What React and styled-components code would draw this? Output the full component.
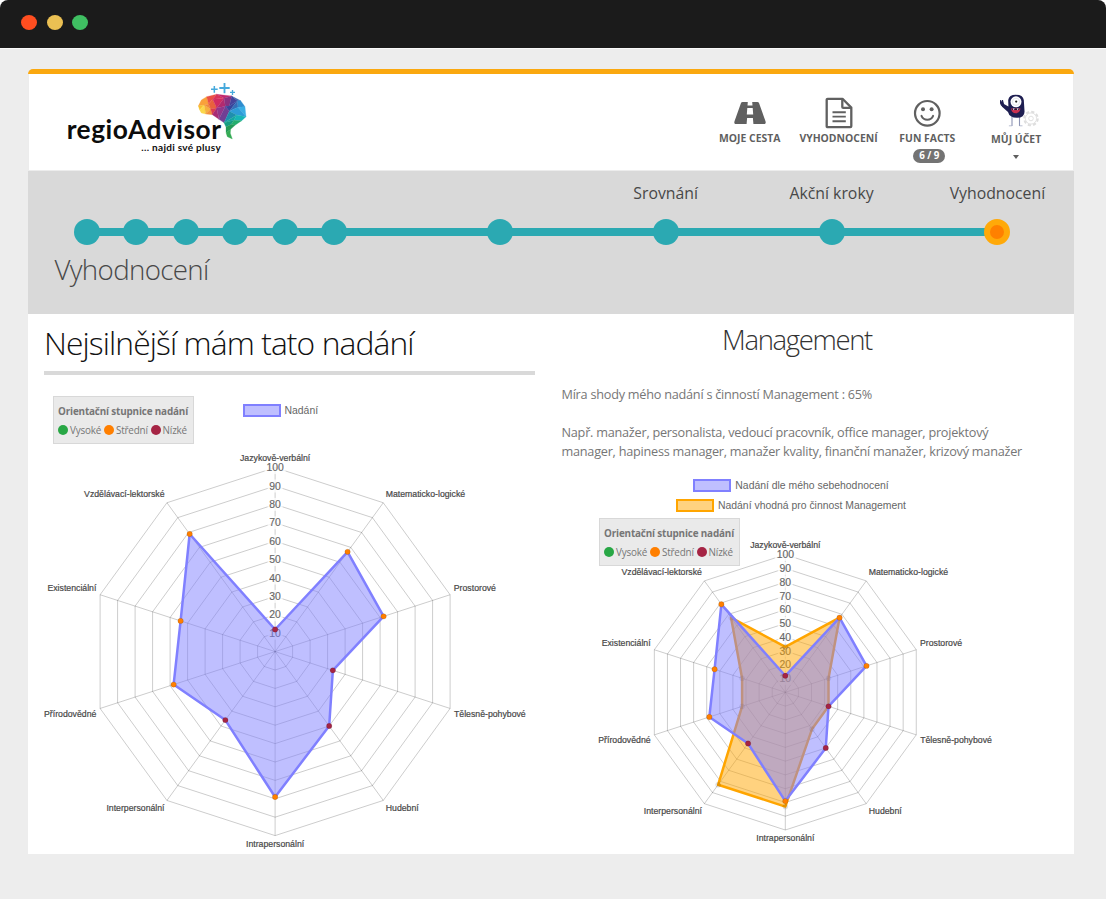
import React from 'react';
import styled, { createGlobalStyle } from 'styled-components';

const GlobalStyle = createGlobalStyle`
  *, *::before, *::after { box-sizing: border-box; }
  body {
    margin: 0;
    background: #fff;
    font-family: "Open Sans", "Noto Sans", sans-serif;
    color: #767676;
  }
`;

const Window = styled.div`
  width: 1106px;
  height: 899px;
  overflow: hidden;
  display: flex;
  flex-direction: column;
`;

const TitleBar = styled.div`
  flex: none;
  height: 48px;
  padding: 0 0 4px 21px;
  display: flex;
  align-items: center;
  gap: 9.6px;
  background: #1b1b1b;
  border-radius: 8px 8px 0 0;
`;

const Light = styled.span`
  width: 16px;
  height: 15px;
  border-radius: 50%;
  background: ${(p) => p.$color};
`;

const Desktop = styled.div`
  flex: 1;
  padding: 21px 32px 45px 28px;
  background: #ededed;
  border-top: 1px solid #fafafa;
`;

const Card = styled.div`
  width: 1046px;
  height: 785px;
  margin-top: -1px;
  display: flex;
  flex-direction: column;
  overflow: hidden;
  background: #fff;
  border-top: 5px solid #faa80f;
  border-radius: 5px 5px 0 0;
`;

const Header = styled.header`
  flex: none;
  height: 97px;
  padding: 4px 12.5px 0 31px;
  display: flex;
  justify-content: space-between;
  border: 1px solid #ececec;
  border-top: 0;
`;

const Nav = styled.nav`
  display: flex;
  align-items: flex-start;
  padding-top: 15px;
`;

const NavItem = styled.a`
  width: 88.8px;
  display: flex;
  flex-direction: column;
  align-items: center;
  font-size: 10.4px;
  line-height: 10px;
  font-weight: 700;
  color: #5f5f5f;
  white-space: nowrap;
`;

const NavIcon = styled.span`
  height: ${(p) => p.$height || 40}px;
  padding-bottom: ${(p) => p.$lift || 0}px;
  display: flex;
  align-items: center;
`;

const Badge = styled.span`
  width: 32px;
  height: 14px;
  margin: 6px 0 0 4px;
  border-radius: 7px;
  background: #737373;
  color: #fff;
  font-size: 9.8px;
  line-height: 14px;
  font-weight: 700;
  text-align: center;
`;

const Caret = styled.span`
  margin-top: 11px;
  border: 3.5px solid transparent;
  border-top: 4px solid #5f5f5f;
  border-bottom: 0;
`;

const Progress = styled.section`
  flex: none;
  height: 143px;
  padding: 10px 0 0 46px;
  background: #d9d9d9;
  color: #484848;
`;

const Steps = styled.div`
  display: flex;
`;

const Step = styled.div`
  width: ${(p) => p.$width}px;
  display: flex;
  align-items: flex-end;
`;

const StepMark = styled.div`
  width: 26px;
  height: 64px;
  display: flex;
  flex-direction: column;
  align-items: center;
  justify-content: space-between;
`;

const StepLabel = styled.span`
  font-size: 15.8px;
  line-height: 24px;
  white-space: nowrap;
`;

const Dot = styled.span`
  width: 26px;
  height: 26px;
  margin-top: auto;
  border-radius: 50%;
  background: ${(p) => (p.$current ? '#ff8000' : '#2ba9b2')};
  border: ${(p) => (p.$current ? '6.5px solid #ffa909' : '0')};
`;

const Connector = styled.span`
  flex: 1;
  height: 8px;
  margin: 0 -1px 9px;
  background: #2ba9b2;
`;

const PageTitle = styled.h1`
  margin: 4px 0 0 -19.5px;
  font-size: 27.7px;
  line-height: 41px;
  font-weight: 300;
  letter-spacing: -0.66px;
`;

const Content = styled.main`
  flex: 1;
  display: grid;
  grid-template-columns: 491px 492px;
  column-gap: 16px;
  padding-left: 16px;
`;

const Panel = styled.section`
  display: flex;
  flex-direction: column;
  min-width: 0;
`;

const PanelTitle = styled.h2`
  margin: 0 0 21px;
  padding-top: 7px;
  height: 61px;
  border-bottom: 4px solid #d9d9d9;
  color: #111;
  font-size: 31.8px;
  line-height: 43px;
  font-weight: 300;
  letter-spacing: -0.91px;
`;

const ActivityTitle = styled.h2`
  margin: 0 0 26px;
  padding-top: 6px;
  height: 45px;
  color: #333;
  font-size: 27.5px;
  line-height: 40px;
  font-weight: 300;
  letter-spacing: -1.35px;
  text-align: center;
`;

const Paragraph = styled.p`
  margin: 0 0 19px 10.5px;
  font-size: 12.7px;
  line-height: 19px;
  letter-spacing: -0.245px;
  color: #767676;
`;

const LegendRow = styled.div`
  display: flex;
  align-items: flex-start;
  padding-left: 9px;
  gap: 49px;
`;

const LegendStack = styled.div`
  height: 39px;
  padding-right: 12px;
  margin-top: -1px;
  display: flex;
  flex-direction: column;
  align-items: center;
  gap: 6.5px;
`;

const LegendItem = styled.span`
  display: flex;
  align-items: center;
  gap: 4px;
  height: 13px;
  margin-top: ${(p) => p.$top || 0}px;
  font: 10.42px/13px "Liberation Sans", Arial, sans-serif;
  color: #666;
  white-space: nowrap;
`;

const Swatch = styled.i`
  width: 38px;
  height: 13px;
  border: 2.4px solid ${(p) => p.$line};
  background: ${(p) => p.$fill};
`;

const ScaleBox = styled.div`
  width: 140.5px;
  height: 48px;
  padding: 6px 0 0 4px;
  border: 1px solid #d8d8d8;
  background: #eaeaea;
  font-size: 9.9px;
  letter-spacing: -0.18px;
  white-space: nowrap;
`;

const ScaleTitle = styled.div`
  font-weight: 700;
  line-height: 16px;
  letter-spacing: -0.16px;
`;

const ScaleLevels = styled.div`
  display: flex;
  gap: 2.8px;
  padding-top: 2px;
`;

const Level = styled.span`
  display: flex;
  align-items: center;
  gap: 2px;
  line-height: 18px;

  &::before {
    content: "";
    width: 10px;
    height: 10px;
    border-radius: 50%;
    background: ${(p) => p.$color};
  }
`;

const ChartArea = styled.div`
  position: relative;
`;

const FloatingScale = styled.div`
  position: absolute;
  left: 48px;
  top: 0;
`;

const ChartSvg = styled.svg`
  display: block;
  font-family: "Liberation Sans", Arial, sans-serif;
`;

const LABELS = [
  'Jazykově-verbální', 'Matematicko-logické', 'Prostorové', 'Tělesně-pohybové', 'Hudební',
  'Intrapersonální', 'Interpersonální', 'Přírodovědné', 'Existenciální', 'Vzdělávací-lektorské',
];
const LABEL_DX = [0, 2.4, 3.7, 3.9, 2.5, 0, -2.4, -3.7, -3.7, -2.4];
const LABEL_DY = [-6.2, -5.6, -3.4, 8.2, 10.6, 11.2, 10.6, 8.2, -3.4, -5.6];
const TALENTS = [12, 67, 62, 33, 50, 79, 46, 58, 54, 79];
const MANAGEMENT = [33, 67, 33, 33, 33, 83, 83, 33, 33, 67];
const LOW = '#a52444';
const MEDIUM = '#ff7f00';
const HIGH = '#28a745';

function Radar({ width, height, cx, cy, radius, series }) {
  const at = (index, value) => {
    const angle = (index * Math.PI) / 5;
    const r = (radius * value) / 100;
    return [cx + r * Math.sin(angle), cy - r * Math.cos(angle)];
  };
  const shape = (values) => values.map((v, i) => at(i, v).join(',')).join(' ');
  const rings = [10, 20, 30, 40, 50, 60, 70, 80, 90, 100];

  return (
    <ChartSvg width={width} height={height} viewBox={`0 0 ${width} ${height}`}>
      <g fill="none" stroke="#000" strokeOpacity="0.2">
        {rings.map((ring) => <polygon key={ring} points={shape(LABELS.map(() => ring))} />)}
        {LABELS.map((label, i) => {
          const [x, y] = at(i, 100);
          return <line key={label} x1={cx} y1={cy} x2={x} y2={y} />;
        })}
      </g>
      <g fontSize="10.4" textAnchor="middle">
        {rings.map((ring) => {
          const y = cy - (radius * ring) / 100;
          const w = ring === 100 ? 21 : 15;
          return (
            <g key={ring}>
              <rect x={cx - w / 2} y={y - 6.5} width={w} height="13" fill="#fff" fillOpacity="0.75" />
              <text x={cx} y={y + 3.6} fill="#666" stroke="#666" strokeWidth="0.15">{ring}</text>
            </g>
          );
        })}
      </g>
      <g fontSize="8.72" fill="#484848" stroke="#484848" strokeWidth="0.2">
        {LABELS.map((label, i) => {
          const [x, y] = at(i, 100);
          const anchor = i % 5 === 0 ? 'middle' : i < 5 ? 'start' : 'end';
          return <text key={label} x={x + LABEL_DX[i]} y={y + LABEL_DY[i]} textAnchor={anchor}>{label}</text>;
        })}
      </g>
      {series.map(({ values, color, fill, graded }) => (
        <g key={color}>
          <polygon points={shape(values)} fill={fill} stroke={color} strokeWidth="2.5" strokeLinejoin="round" />
          {values.map((value, i) => {
            const [x, y] = at(i, value);
            const dot = value > 50 ? MEDIUM : LOW;
            return (
              <circle
                key={LABELS[i]}
                cx={x}
                cy={y}
                r={graded ? 2.7 : 2.6}
                fill={graded ? dot : 'rgba(0,0,0,0.1)'}
                stroke={graded ? 'rgba(0,0,0,0.15)' : 'rgba(0,0,0,0.06)'}
                strokeWidth="0.8"
              />
            );
          })}
        </g>
      ))}
    </ChartSvg>
  );
}

const talentSeries = { values: TALENTS, color: '#8080ff', fill: 'rgba(128,128,255,0.5)', graded: true };
const managementSeries = { values: MANAGEMENT, color: '#ffa500', fill: 'rgba(255,165,0,0.5)' };

function Scale() {
  return (
    <ScaleBox>
      <ScaleTitle>Orientační stupnice nadání</ScaleTitle>
      <ScaleLevels>
        <Level $color={HIGH}>Vysoké</Level>
        <Level $color={MEDIUM}>Střední</Level>
        <Level $color={LOW}>Nízké</Level>
      </ScaleLevels>
    </ScaleBox>
  );
}

function Logo() {
  return (
    <svg width="190" height="80" viewBox="180 234 570 240">
      <g stroke="#45a9dc" strokeWidth="4.5" fill="none">
        <path d="M633 268h20M643 258v20" />
        <path d="M658 264h31M673.500 249v31" strokeWidth="5.500" />
        <path d="M690 277h15M697.500 270v15" strokeWidth="4" />
      </g>
      <g strokeWidth="0.800" strokeLinejoin="round">
        <path d="M595 318l9-18 16-10 6 22-13 3z" fill="#f9a13b" stroke="#f9a13b" />
        <path d="M595 318l18-3-14 15z" fill="#f6c12d" stroke="#f6c12d" />
        <path d="M599 330l14-15 4 27-13-3z" fill="#fbd84b" stroke="#fbd84b" />
        <path d="M613 315l19 12-15 15z" fill="#f5b13d" stroke="#f5b13d" />
        <path d="M613 315l13-3 6 15z" fill="#f08b3c" stroke="#f08b3c" />
        <path d="M632 327l-15 15 20 2z" fill="#f3913d" stroke="#f3913d" />
        <path d="M620 290l30-7-12 15-12 14z" fill="#ea5045" stroke="#ea5045" />
        <path d="M638 298l-12 14 6 15 18-3z" fill="#e8623d" stroke="#e8623d" />
        <path d="M650 283l-12 15 34-3z" fill="#d8345a" stroke="#d8345a" />
        <path d="M638 298l34-3-22 29z" fill="#d12c61" stroke="#d12c61" />
        <path d="M650 324l-18 3 5 17z" fill="#dc3c4d" stroke="#dc3c4d" />
        <path d="M650 283l45 5-23 7z" fill="#c02a70" stroke="#c02a70" />
        <path d="M672 295l-22 29 26-5z" fill="#b22a6e" stroke="#b22a6e" />
        <path d="M672 295l23-7-7 30-12 1z" fill="#8b3080" stroke="#8b3080" />
        <path d="M650 324l-13 20 20 14z" fill="#a82b74" stroke="#a82b74" />
        <path d="M650 324l26-5-19 39z" fill="#93368a" stroke="#93368a" />
        <path d="M676 319l12 15-16 34-15-10z" fill="#713f94" stroke="#713f94" />
        <path d="M695 288l17 14-24 16z" fill="#46429a" stroke="#46429a" />
        <path d="M676 319l12-1 24-16-24 32z" fill="#37459b" stroke="#37459b" />
        <path d="M695 288l27 14-10 0z" fill="#3d64ae" stroke="#3d64ae" />
        <path d="M712 302l10 0 13 18-21 2z" fill="#2f8dcf" stroke="#2f8dcf" />
        <path d="M712 302l2 20-26 12z" fill="#336fb8" stroke="#336fb8" />
        <path d="M714 322l21-2 3 30z" fill="#39aee5" stroke="#39aee5" />
        <path d="M714 322l24 28-28-5-22-11z" fill="#2d9cd7" stroke="#2d9cd7" />
        <path d="M688 334l22 11-38 23z" fill="#1e8fae" stroke="#1e8fae" />
        <path d="M710 345l-8 16-30 7z" fill="#15a69f" stroke="#15a69f" />
        <path d="M710 345l28 5-13 12-23-1z" fill="#16b5b6" stroke="#16b5b6" />
        <path d="M672 368l30-7-8 12-16 8z" fill="#159d83" stroke="#159d83" />
        <path d="M702 361l23 1-20 14-11-3z" fill="#25ad6e" stroke="#25ad6e" />
        <path d="M678 381l16-8 11 3-13 12-14 10z" fill="#249a58" stroke="#249a58" />
        <path d="M678 398l14-10-1 12 6 17-15-7z" fill="#35ab55" stroke="#35ab55" />
      </g>
      <g fill="#0c0c0c" fontFamily="Lato, sans-serif" fontWeight="700">
        <text x="200" y="416" fontSize="79" textLength="463">regioAdvisor</text>
        <text x="424" y="452" fontSize="30" textLength="238">... najdi své plusy</text>
      </g>
    </svg>
  );
}

function RoadIcon() {
  return (
    <svg width="32" height="24" viewBox="0 0 32 24">
      <path
        fill="#606060"
        fillRule="evenodd"
        d="M8.600 1h5.200l-.3 3.400h5l-.3-3.400h5.200c.8 0 1.300.4 1.600 1.100l6.500 18.200c.5 1.600.1 2.700-1.300 2.700h-10.800l-.5-6h-5.800l-.5 6H1.800C.4 23 0 21.900.500 20.300L7 2.100C7.300 1.400 7.800 1 8.600 1zM13.300 7l-.5 6.400h6.400L18.700 7z"
      />
    </svg>
  );
}

function DocumentIcon() {
  return (
    <svg width="28" height="32" viewBox="0 0 28 32" fill="none" stroke="#606060" strokeWidth="2.300">
      <path d="M2.700 1.800H17.500L26.300 10.600V29.200Q26.300 30.200 25.300 30.200H2.700Q1.700 30.200 1.700 29.200V2.800Q1.700 1.800 2.700 1.800Z" strokeLinejoin="round" />
      <path d="M17.300 2V9.900Q17.300 10.800 18.200 10.800H26" />
      <path d="M7.500 15.200H20.800M7.500 19.600H20.800M7.500 24.200H20.800" strokeWidth="1.900" />
    </svg>
  );
}

function SmileIcon() {
  return (
    <svg width="28" height="28" viewBox="0 0 28 28">
      <circle cx="14.300" cy="14.300" r="12.300" fill="none" stroke="#606060" strokeWidth="2.200" />
      <circle cx="10" cy="10.200" r="2" fill="#606060" />
      <circle cx="18.600" cy="10.200" r="2" fill="#606060" />
      <path d="M8.500 16.900C10.600 22 18 22 20.100 16.900" fill="none" stroke="#606060" strokeWidth="2" strokeLinecap="round" />
    </svg>
  );
}

function MonsterIcon() {
  return (
    <svg width="46" height="34" viewBox="0 0 46 34">
      <g fill="none" stroke="#dedede">
        <circle cx="38" cy="24.500" r="6.800" strokeWidth="2" strokeDasharray="3.200 2.140" />
        <circle cx="38" cy="24.500" r="5.600" strokeWidth="0.900" />
        <circle cx="38" cy="24.500" r="2.300" strokeWidth="0.900" />
      </g>
      <path d="M19 21v11M26.500 21v11" stroke="#8d94b4" strokeWidth="1.100" />
      <path d="M15.900 31.800h3M26.500 31.800h3" stroke="#aab0c8" strokeWidth="0.800" />
      <path d="M15.200 6Q16 .800 22.800 .800Q30 .800 30.800 6L31.500 17Q32 23.800 24 23.800Q16.500 23.800 15 18L8.800 12.500L10 9.500L15.400 12.600Z" fill="#1e1e51" />
      <path d="M11 12.500L9.500 6L8.600 9L7.600 6.300L7.500 9L8.400 11.500Z" fill="#1e1e51" stroke="#1e1e51" />
      <circle cx="23" cy="7.800" r="5.500" fill="#fff" />
      <circle cx="23" cy="7.800" r="3.600" fill="none" stroke="#cfd2dd" strokeWidth="0.600" />
      <circle cx="23.200" cy="7.600" r="1.100" fill="#222" />
      <path d="M18 14.500H27.500Q26.700 19.200 22.700 19.200Q18.700 19.200 18 14.500Z" fill="#c9304f" />
      <path d="M19.200 14.700h7v1.200h-7z" fill="#1b1030" />
      <path d="M19.700 14.500l1 1.800 1-1.800zM23.700 14.500l1 1.800 1-1.800z" fill="#fff" />
    </svg>
  );
}

const STEPS = [
  { width: 49.4 }, { width: 49.4 }, { width: 49.4 }, { width: 49.4 }, { width: 49.4 },
  { width: 165.8 }, { width: 165.9 },
  { width: 165.9, label: 'Srovnání' },
  { width: 165.9, label: 'Akční kroky' },
  { width: 26, label: 'Vyhodnocení', current: true },
];

export default function App() {
  return (
    <Window>
      <GlobalStyle />
      <TitleBar>
        <Light $color="#ff4e20" />
        <Light $color="#ebc053" />
        <Light $color="#3fbf62" />
      </TitleBar>
      <Desktop>
        <Card>
          <Header>
            <Logo />
            <Nav>
              <NavItem>
                <NavIcon><RoadIcon /></NavIcon>
                MOJE CESTA
              </NavItem>
              <NavItem>
                <NavIcon><DocumentIcon /></NavIcon>
                VYHODNOCENÍ
              </NavItem>
              <NavItem>
                <NavIcon><SmileIcon /></NavIcon>
                FUN FACTS
                <Badge>6 / 9</Badge>
              </NavItem>
              <NavItem>
                <NavIcon $height={41} $lift={6}><MonsterIcon /></NavIcon>
                MŮJ ÚČET
                <Caret />
              </NavItem>
            </Nav>
          </Header>
          <Progress>
            <Steps>
              {STEPS.map(({ width, label, current }, i) => (
                <Step key={i} $width={width}>
                  <StepMark>
                    {label && <StepLabel>{label}</StepLabel>}
                    <Dot $current={current} />
                  </StepMark>
                  {!current && <Connector />}
                </Step>
              ))}
            </Steps>
            <PageTitle>Vyhodnocení</PageTitle>
          </Progress>
          <Content>
            <Panel>
              <PanelTitle>Nejsilnější mám tato nadání</PanelTitle>
              <LegendRow>
                <Scale />
                <LegendItem $top={7.5}>
                  <Swatch $line="#8080ff" $fill="#bfbfff" />
                  Nadání
                </LegendItem>
              </LegendRow>
              <Radar width={491} height={409} cx={231.100} cy={207.600} radius={184} series={[talentSeries]} />
            </Panel>
            <Panel>
              <ActivityTitle>Management</ActivityTitle>
              <Paragraph>Míra shody mého nadání s činností Management : 65%</Paragraph>
              <Paragraph>
                Např. manažer, personalista, vedoucí pracovník, office manager, projektový
                <br />
                manager, hapiness manager, manažer kvality, finanční manažer, krizový manažer
              </Paragraph>
              <LegendStack>
                <LegendItem>
                  <Swatch $line="#8080ff" $fill="#bfbfff" />
                  Nadání dle mého sebehodnocení
                </LegendItem>
                <LegendItem>
                  <Swatch $line="#ffa500" $fill="#ffd280" />
                  Nadání vhodná pro činnost Management
                </LegendItem>
              </LegendStack>
              <ChartArea>
                <Radar width={492} height={336} cx={234.300} cy={174.300} radius={137.700} series={[managementSeries, talentSeries]} />
                <FloatingScale><Scale /></FloatingScale>
              </ChartArea>
            </Panel>
          </Content>
        </Card>
      </Desktop>
    </Window>
  );
}
